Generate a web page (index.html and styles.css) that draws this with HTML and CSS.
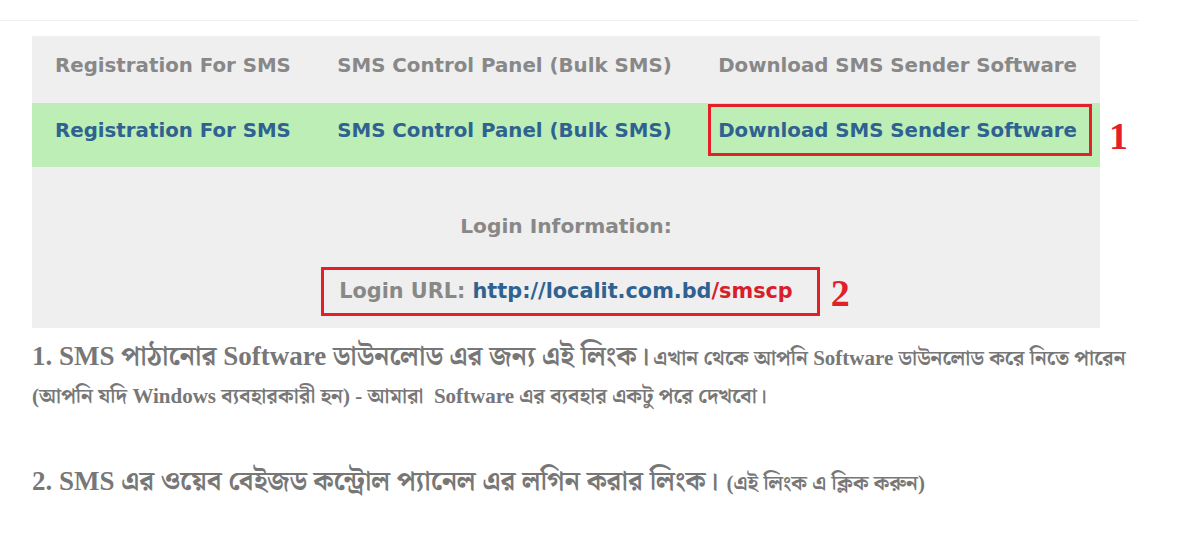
FILE: index.html
```html
<!DOCTYPE html>
<html lang="bn">
<head>
    <meta charset="UTF-8">
    <meta name="viewport" content="width=device-width, initial-scale=1.0">
    <title>SMS Software</title>
    <link rel="stylesheet" href="styles.css">
</head>
<body>
    <div class="topline"></div>
    <div class="page">
        <div class="panel">
            <div class="row row-head">
                <div class="cell">Registration For SMS</div>
                <div class="cell">SMS Control Panel (Bulk SMS)</div>
                <div class="cell">Download SMS Sender Software</div>
            </div>
            <div class="row row-links">
                <div class="cell"><a href="#">Registration For SMS</a></div>
                <div class="cell"><a href="#">SMS Control Panel (Bulk SMS)</a></div>
                <div class="cell marked">
                    <a href="#">Download SMS Sender Software</a>
                    <span class="mark-box mark-one"></span>
                    <span class="mark-num mark-num-one">1</span>
                </div>
            </div>
            <div class="login">
                <p class="login-title">Login Information:</p>
                <p class="login-url">
                    <span class="marked">Login URL: <a href="#">http://localit.com.bd</a><span class="red">/smscp</span><span class="mark-box mark-two"></span><span class="mark-num mark-num-two">2</span></span>
                </p>
            </div>
        </div>

        <div class="notes">
            <p class="note">
                <span class="big">1. SMS পাঠানোর Software ডাউনলোড এর জন্য এই লিংক।</span>
                <span class="small">এখান থেকে আপনি Software ডাউনলোড করে নিতে পারেন (আপনি যদি Windows ব্যবহারকারী হন) - আমারা &nbsp;Software এর ব্যবহার একটু পরে দেখবো।</span>
            </p>
            <p class="note note-two">
                <span class="big">2. SMS এর ওয়েব বেইজড কন্ট্রোল প্যানেল এর লগিন করার লিংক।</span>
                &nbsp;<span class="small">(এই লিংক এ ক্লিক করুন)</span>
            </p>
        </div>
    </div>
</body>
</html>
```

FILE: styles.css
```css
body {
    margin: 0;
    background-color: #fff;
    font-family: "DejaVu Sans", Verdana, sans-serif;
}

.topline {
    width: 1138px;
    height: 20px;
    border-bottom: 1px solid #eee;
}

.page {
    padding: 15px 0 0 32px;
}

.panel {
    width: 1068px;
    background-color: #efefef;
}

.row {
    display: flex;
    align-items: flex-start;
    justify-content: space-between;
    padding: 0 23px;
    box-sizing: border-box;
}

.cell {
    font-size: 19.8px;
    font-weight: bold;
    line-height: 24px;
    white-space: nowrap;
}

.row-head {
    height: 67px;
    padding-top: 18px;
    color: #888;
}

.row-links {
    height: 64px;
    padding-top: 16px;
    background-color: #bdeeb5;
}

.row-links a {
    color: #2f6290;
    text-decoration: none;
}

.marked {
    position: relative;
}

/* red annotation boxes drawn over the screenshot */
.mark-box {
    position: absolute;
    border: 3px solid #e3202a;
}

.mark-one {
    left: -10px;
    right: -15px;
    top: -15px;
    bottom: -13px;
}

.mark-two {
    left: -18px;
    right: -27px;
    top: -12px;
    bottom: -13px;
}

.mark-num {
    position: absolute;
    font-family: "Liberation Serif", "Times New Roman", serif;
    font-weight: bold;
    font-size: 38px;
    line-height: 38px;
    color: #e3202a;
}

.mark-num-one {
    left: calc(100% + 32px);
    top: -2px;
}

.mark-num-two {
    left: calc(100% + 38px);
    top: -5px;
}

.login {
    padding: 47px 0 25px;
    text-align: center;
    color: #888;
    font-size: 20.2px;
    font-weight: bold;
}

.login p {
    margin: 0;
    line-height: 24px;
}

.login-url {
    margin-top: 41px !important;
}

.login-url .marked {
    display: inline-block;
    font-size: 20.8px;
}

.login-url a {
    color: #2f6290;
    text-decoration: none;
}

.red {
    color: #d8202a;
}

.notes {
    width: 1120px;
    font-family: "Liberation Serif", "Noto Serif Bengali", "Noto Sans Bengali", serif;
    color: #777;
    padding-top: 10px;
}

.note {
    margin: 0;
    line-height: 37px;
}

.note-two {
    margin-top: 47px;
}

.big {
    font-size: 27px;
    font-weight: bold;
}

.small {
    font-size: 21px;
    font-weight: bold;
}
```
